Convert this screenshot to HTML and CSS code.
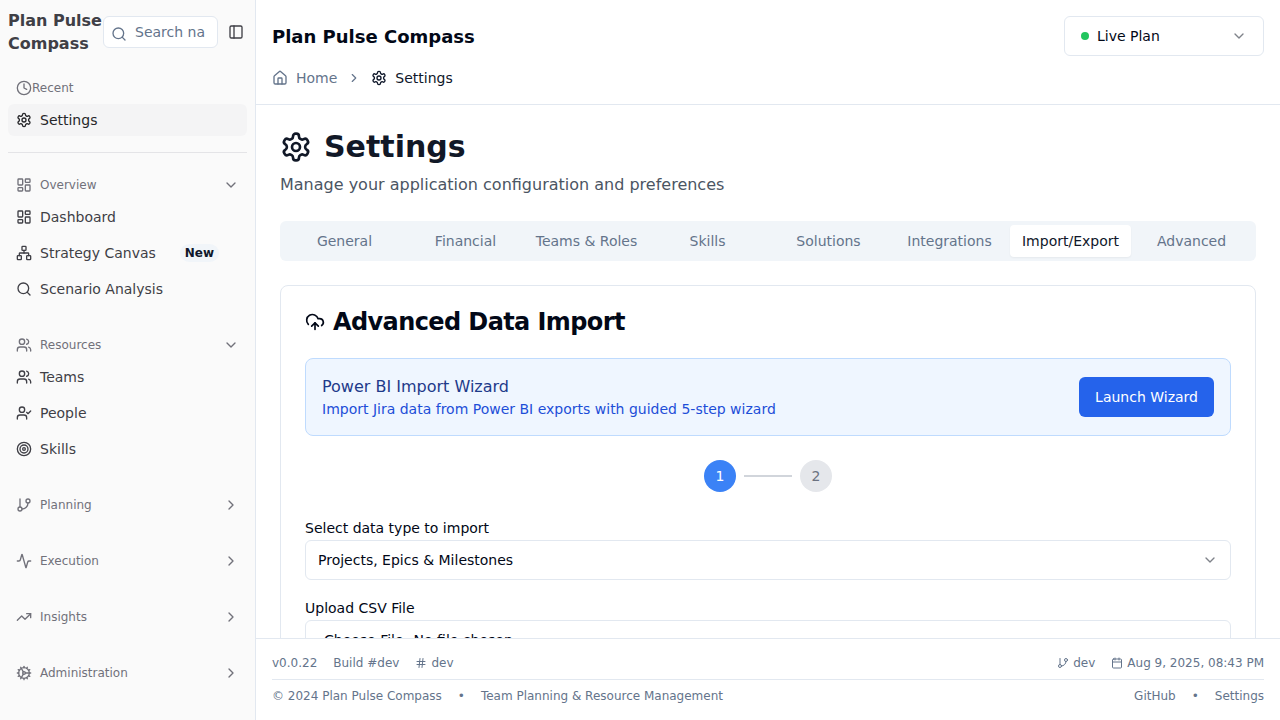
FILE: index.html
```html
<!DOCTYPE html>
<html lang="en">
<head>
    <meta charset="UTF-8">
    <title>Plan Pulse Compass</title>
    <link rel="stylesheet" href="styles.css">
</head>
<body>
<svg class="sprite" xmlns="http://www.w3.org/2000/svg">
    <symbol id="i-gear" viewBox="0 0 24 24"><path d="M12.22 2h-.44a2 2 0 0 0-2 2v.18a2 2 0 0 1-1 1.73l-.43.25a2 2 0 0 1-2 0l-.15-.08a2 2 0 0 0-2.73.73l-.22.38a2 2 0 0 0 .73 2.73l.15.1a2 2 0 0 1 1 1.72v.51a2 2 0 0 1-1 1.74l-.15.09a2 2 0 0 0-.73 2.73l.22.38a2 2 0 0 0 2.73.73l.15-.08a2 2 0 0 1 2 0l.43.25a2 2 0 0 1 1 1.73V20a2 2 0 0 0 2 2h.44a2 2 0 0 0 2-2v-.18a2 2 0 0 1 1-1.73l.43-.25a2 2 0 0 1 2 0l.15.08a2 2 0 0 0 2.73-.73l.22-.39a2 2 0 0 0-.73-2.73l-.15-.08a2 2 0 0 1-1-1.74v-.5a2 2 0 0 1 1-1.74l.15-.09a2 2 0 0 0 .73-2.73l-.22-.38a2 2 0 0 0-2.73-.73l-.15.08a2 2 0 0 1-2 0l-.43-.25a2 2 0 0 1-1-1.73V4a2 2 0 0 0-2-2z"/><circle cx="12" cy="12" r="3"/></symbol>
    <symbol id="i-dash" viewBox="0 0 24 24"><rect x="3" y="3" width="7" height="9" rx="1"/><rect x="14" y="3" width="7" height="5" rx="1"/><rect x="14" y="12" width="7" height="9" rx="1"/><rect x="3" y="16" width="7" height="5" rx="1"/></symbol>
    <symbol id="i-network" viewBox="0 0 24 24"><rect x="16" y="16" width="6" height="6" rx="1"/><rect x="2" y="16" width="6" height="6" rx="1"/><rect x="9" y="2" width="6" height="6" rx="1"/><path d="M5 16v-3a1 1 0 0 1 1-1h12a1 1 0 0 1 1 1v3"/><path d="M12 12V8"/></symbol>
    <symbol id="i-search" viewBox="0 0 24 24"><circle cx="11" cy="11" r="8"/><path d="m21 21-4.3-4.3"/></symbol>
    <symbol id="i-users" viewBox="0 0 24 24"><path d="M16 21v-2a4 4 0 0 0-4-4H6a4 4 0 0 0-4 4v2"/><circle cx="9" cy="7" r="4"/><path d="M22 21v-2a4 4 0 0 0-3-3.87"/><path d="M16 3.13a4 4 0 0 1 0 7.75"/></symbol>
    <symbol id="i-usercheck" viewBox="0 0 24 24"><path d="M16 21v-2a4 4 0 0 0-4-4H6a4 4 0 0 0-4 4v2"/><circle cx="9" cy="7" r="4"/><polyline points="16 11 18 13 22 9"/></symbol>
    <symbol id="i-target" viewBox="0 0 24 24"><circle cx="12" cy="12" r="10"/><circle cx="12" cy="12" r="6"/><circle cx="12" cy="12" r="2"/></symbol>
    <symbol id="i-branch" viewBox="0 0 24 24"><line x1="6" y1="3" x2="6" y2="15"/><circle cx="18" cy="6" r="3"/><circle cx="6" cy="18" r="3"/><path d="M18 9a9 9 0 0 1-9 9"/></symbol>
    <symbol id="i-activity" viewBox="0 0 24 24"><path d="M22 12h-2.48a2 2 0 0 0-1.93 1.46l-2.35 8.36a.25.25 0 0 1-.48 0L9.24 2.18a.25.25 0 0 0-.48 0l-2.35 8.36A2 2 0 0 1 4.49 12H2"/></symbol>
    <symbol id="i-trend" viewBox="0 0 24 24"><polyline points="22 7 13.5 15.5 8.5 10.5 2 17"/><polyline points="16 7 22 7 22 13"/></symbol>
    <symbol id="i-cog" viewBox="0 0 24 24"><path d="M12 20a8 8 0 1 0 0-16 8 8 0 0 0 0 16Z"/><path d="M12 14a2 2 0 1 0 0-4 2 2 0 0 0 0 4Z"/><path d="M12 2v2"/><path d="M12 22v-2"/><path d="m17 20.66-1-1.73"/><path d="M11 10.27 7 3.34"/><path d="m20.66 17-1.73-1"/><path d="m3.34 7 1.73 1"/><path d="M14 12h8"/><path d="M2 12h2"/><path d="m20.66 7-1.73 1"/><path d="m3.34 17 1.73-1"/><path d="m17 3.34-1 1.73"/><path d="m11 13.73-4 6.93"/></symbol>
    <symbol id="i-clock" viewBox="0 0 24 24"><circle cx="12" cy="12" r="10"/><polyline points="12 6 12 12 16 14"/></symbol>
    <symbol id="i-panel" viewBox="0 0 24 24"><rect x="3" y="3" width="18" height="18" rx="2"/><path d="M9 3v18"/></symbol>
    <symbol id="i-home" viewBox="0 0 24 24"><path d="M15 21v-8a1 1 0 0 0-1-1h-4a1 1 0 0 0-1 1v8"/><path d="M3 10a2 2 0 0 1 .709-1.528l7-5.999a2 2 0 0 1 2.582 0l7 5.999A2 2 0 0 1 21 10v9a2 2 0 0 1-2 2H5a2 2 0 0 1-2-2z"/></symbol>
    <symbol id="i-cloud" viewBox="0 0 24 24"><path d="M12 13v8"/><path d="M4 14.899A7 7 0 1 1 15.71 8h1.79a4.5 4.5 0 0 1 2.5 8.242"/><path d="m8 17 4-4 4 4"/></symbol>
    <symbol id="i-hash" viewBox="0 0 24 24"><line x1="4" y1="9" x2="20" y2="9"/><line x1="4" y1="15" x2="20" y2="15"/><line x1="10" y1="3" x2="8" y2="21"/><line x1="16" y1="3" x2="14" y2="21"/></symbol>
    <symbol id="i-calendar" viewBox="0 0 24 24"><path d="M8 2v4"/><path d="M16 2v4"/><rect x="3" y="4" width="18" height="18" rx="2"/><path d="M3 10h18"/></symbol>
    <symbol id="i-down" viewBox="0 0 24 24"><path d="m6 9 6 6 6-6"/></symbol>
    <symbol id="i-right" viewBox="0 0 24 24"><path d="m9 18 6-6-6-6"/></symbol>
</svg>

<div class="app">
    <aside class="sidebar">
        <div class="side-head">
            <div class="brand">Plan Pulse Compass</div>
            <div class="side-search">
                <svg class="icon"><use href="#i-search"/></svg>
                <span class="side-search-text">Search na</span>
            </div>
            <button class="side-toggle"><svg class="icon"><use href="#i-panel"/></svg></button>
        </div>

        <div class="recent">
            <div class="recent-label"><svg class="icon"><use href="#i-clock"/></svg>Recent</div>
            <a class="nav-item nav-item-active"><svg class="icon"><use href="#i-gear"/></svg>Settings</a>
        </div>
        <div class="side-sep"></div>

        <nav class="side-nav">
            <div class="nav-group">
                <div class="group-label"><svg class="icon"><use href="#i-dash"/></svg><span>Overview</span><svg class="icon group-arrow"><use href="#i-down"/></svg></div>
                <a class="nav-item"><svg class="icon"><use href="#i-dash"/></svg>Dashboard</a>
                <a class="nav-item"><svg class="icon"><use href="#i-network"/></svg>Strategy Canvas<span class="badge">New</span></a>
                <a class="nav-item"><svg class="icon"><use href="#i-search"/></svg>Scenario Analysis</a>
            </div>
            <div class="nav-group">
                <div class="group-label"><svg class="icon"><use href="#i-users"/></svg><span>Resources</span><svg class="icon group-arrow"><use href="#i-down"/></svg></div>
                <a class="nav-item"><svg class="icon"><use href="#i-users"/></svg>Teams</a>
                <a class="nav-item"><svg class="icon"><use href="#i-usercheck"/></svg>People</a>
                <a class="nav-item"><svg class="icon"><use href="#i-target"/></svg>Skills</a>
            </div>
            <div class="nav-group">
                <div class="group-label"><svg class="icon"><use href="#i-branch"/></svg><span>Planning</span><svg class="icon group-arrow"><use href="#i-right"/></svg></div>
            </div>
            <div class="nav-group">
                <div class="group-label"><svg class="icon"><use href="#i-activity"/></svg><span>Execution</span><svg class="icon group-arrow"><use href="#i-right"/></svg></div>
            </div>
            <div class="nav-group">
                <div class="group-label"><svg class="icon"><use href="#i-trend"/></svg><span>Insights</span><svg class="icon group-arrow"><use href="#i-right"/></svg></div>
            </div>
            <div class="nav-group">
                <div class="group-label"><svg class="icon"><use href="#i-cog"/></svg><span>Administration</span><svg class="icon group-arrow"><use href="#i-right"/></svg></div>
            </div>
        </nav>
    </aside>

    <div class="main">
        <header class="topbar">
            <div class="topbar-row">
                <div class="app-title">Plan Pulse Compass</div>
                <div class="plan-select">
                    <span class="plan-dot"></span>
                    <span class="plan-name">Live Plan</span>
                    <svg class="icon select-arrow"><use href="#i-down"/></svg>
                </div>
            </div>
            <div class="crumbs">
                <svg class="icon"><use href="#i-home"/></svg>
                <span class="crumb-link">Home</span>
                <svg class="icon crumb-sep"><use href="#i-right"/></svg>
                <svg class="icon crumb-now"><use href="#i-gear"/></svg>
                <span class="crumb-now">Settings</span>
            </div>
        </header>

        <main class="content">
            <h1 class="page-title"><svg class="icon"><use href="#i-gear"/></svg>Settings</h1>
            <p class="page-sub">Manage your application configuration and preferences</p>

            <div class="tabs">
                <div class="tab">General</div>
                <div class="tab">Financial</div>
                <div class="tab">Teams &amp; Roles</div>
                <div class="tab">Skills</div>
                <div class="tab">Solutions</div>
                <div class="tab">Integrations</div>
                <div class="tab tab-active">Import/Export</div>
                <div class="tab">Advanced</div>
            </div>

            <section class="card">
                <h2 class="card-title"><svg class="icon"><use href="#i-cloud"/></svg>Advanced Data Import</h2>

                <div class="wizard">
                    <div>
                        <div class="wizard-title">Power BI Import Wizard</div>
                        <div class="wizard-sub">Import Jira data from Power BI exports with guided 5-step wizard</div>
                    </div>
                    <button class="wizard-btn">Launch Wizard</button>
                </div>

                <div class="steps">
                    <span class="step step-on">1</span>
                    <span class="step-line"></span>
                    <span class="step">2</span>
                </div>

                <label class="field-label">Select data type to import</label>
                <div class="field-select">
                    <span>Projects, Epics &amp; Milestones</span>
                    <svg class="icon select-arrow"><use href="#i-down"/></svg>
                </div>

                <label class="field-label field-label-next">Upload CSV File</label>
                <input class="field-file" type="file">
            </section>
        </main>

        <footer class="footer">
            <div class="foot-row foot-row-top">
                <div class="foot-side">
                    <span>v0.0.22</span>
                    <span>Build #dev</span>
                    <span class="foot-icon-text"><svg class="icon"><use href="#i-hash"/></svg>dev</span>
                </div>
                <div class="foot-side">
                    <span class="foot-icon-text"><svg class="icon"><use href="#i-branch"/></svg>dev</span>
                    <span class="foot-icon-text"><svg class="icon"><use href="#i-calendar"/></svg>Aug 9, 2025, 08:43 PM</span>
                </div>
            </div>
            <div class="foot-row">
                <div class="foot-side">
                    <span>© 2024 Plan Pulse Compass</span>
                    <span>•</span>
                    <span>Team Planning &amp; Resource Management</span>
                </div>
                <div class="foot-side">
                    <span>GitHub</span>
                    <span>•</span>
                    <span>Settings</span>
                </div>
            </div>
        </footer>
    </div>
</div>
</body>
</html>
```

FILE: styles.css
```css
* {
    box-sizing: border-box;
    padding: 0;
    margin: 0;
}
html, body {
    height: 100%;
    overflow: hidden;
}
body {
    font-family: "DejaVu Sans", sans-serif;
    font-size: 14px;
    color: #020817;
    background: #fff;
}
.sprite {
    display: none;
}
.icon {
    width: 16px;
    height: 16px;
    flex: none;
    fill: none;
    stroke: currentColor;
    stroke-width: 2;
    stroke-linecap: round;
    stroke-linejoin: round;
}
.app {
    display: flex;
    height: 100%;
}

/* sidebar */
.sidebar {
    width: 256px;
    flex: none;
    background: #fafafa;
    border-right: 1px solid #e2e8f0;
    color: #3f3f46;
    overflow: hidden;
}
.side-head {
    display: flex;
    align-items: center;
    height: 64px;
    padding: 0 8px;
}
.brand {
    width: 95px;
    flex: none;
    font-size: 16px;
    font-weight: 700;
    line-height: 23px;
}
.side-search {
    width: 115px;
    height: 32px;
    flex: none;
    display: flex;
    align-items: center;
    gap: 8px;
    padding: 0 0 0 7px;
    background: #fff;
    border: 1px solid #e2e8f0;
    border-radius: 6px;
    color: #64748b;
}
.side-search .icon {
    margin-top: 4px;
}
.side-search-text {
    white-space: nowrap;
}
.side-toggle {
    margin-left: 10px;
    width: 16px;
    height: 16px;
    border: none;
    background: none;
    color: #3f3f46;
}
.recent {
    padding: 16px 8px 0;
}
.recent-label {
    display: flex;
    align-items: center;
    height: 16px;
    margin-bottom: 8px;
    padding-left: 8px;
    font-size: 12px;
    color: #71717a;
}
.nav-item {
    display: flex;
    align-items: center;
    gap: 8px;
    height: 32px;
    padding: 0 8px;
    border-radius: 6px;
    white-space: nowrap;
}
.nav-item + .nav-item {
    margin-top: 4px;
}
.nav-item-active {
    background: #f4f4f5;
    color: #27272a;
}
.side-sep {
    height: 1px;
    margin: 16px 8px 0;
    background: #e4e4e7;
}
.side-nav {
    display: flex;
    flex-direction: column;
    gap: 24px;
    padding: 16px 8px 0;
}
.group-label {
    display: flex;
    align-items: center;
    gap: 8px;
    height: 32px;
    padding: 0 8px;
    font-size: 12px;
    color: #71717a;
}
.group-arrow {
    margin-left: auto;
}
.badge {
    margin-left: 16px;
    padding: 1px 5px;
    height: 18px;
    line-height: 16px;
    font-size: 12px;
    font-weight: 700;
    color: #0f172a;
    background: #f1f5f9;
    border-radius: 9px;
}

/* top bar */
.main {
    flex: 1;
    min-width: 0;
    display: flex;
    flex-direction: column;
    height: 100%;
}
.topbar {
    flex: none;
    height: 105px;
    padding: 16px 16px 0;
    border-bottom: 1px solid #e2e8f0;
}
.topbar-row {
    display: flex;
    align-items: center;
    justify-content: space-between;
    height: 40px;
}
.app-title {
    font-size: 18px;
    font-weight: 700;
}
.plan-select {
    display: flex;
    align-items: center;
    width: 200px;
    height: 40px;
    padding: 0 16px;
    border: 1px solid #e2e8f0;
    border-radius: 6px;
}
.plan-dot {
    width: 8px;
    height: 8px;
    margin-right: 8px;
    border-radius: 50%;
    background: #22c55e;
}
.select-arrow {
    margin-left: auto;
    opacity: 0.5;
}
.crumbs {
    display: flex;
    align-items: center;
    height: 20px;
    margin-top: 12px;
    color: #64748b;
}
.crumb-link {
    margin-left: 8px;
}
.crumb-sep {
    width: 14px;
    height: 14px;
    margin: 0 10px;
}
.crumb-now {
    color: #0f172a;
}
span.crumb-now {
    margin-left: 8px;
}

/* page */
.content {
    flex: 1;
    min-height: 0;
    overflow: hidden;
    padding: 24px;
}
.page-title {
    display: flex;
    align-items: center;
    gap: 12px;
    font-size: 30px;
    line-height: 36px;
    color: #111827;
}
.page-title .icon {
    width: 32px;
    height: 32px;
}
.page-sub {
    margin-top: 8px;
    font-size: 16px;
    line-height: 24px;
    color: #4b5563;
}
.tabs {
    display: grid;
    grid-template-columns: repeat(8, 1fr);
    height: 40px;
    margin-top: 24px;
    padding: 4px;
    background: #f1f5f9;
    border-radius: 6px;
}
.tab {
    display: flex;
    align-items: center;
    justify-content: center;
    border-radius: 4px;
    color: #64748b;
}
.tab-active {
    background: #fff;
    color: #0f172a;
    box-shadow: 0 1px 2px rgba(0, 0, 0, 0.05);
}
.card {
    margin-top: 24px;
    padding: 24px;
    border: 1px solid #e2e8f0;
    border-radius: 8px;
}
.card-title {
    display: flex;
    align-items: center;
    gap: 8px;
    font-size: 24px;
    line-height: 24px;
    letter-spacing: -0.6px;
}
.card-title .icon {
    width: 20px;
    height: 20px;
}
.wizard {
    display: flex;
    align-items: center;
    justify-content: space-between;
    height: 78px;
    margin-top: 24px;
    padding: 0 16px;
    background: #eff6ff;
    border: 1px solid #bfdbfe;
    border-radius: 8px;
}
.wizard-title {
    font-size: 16px;
    line-height: 24px;
    color: #1e3a8a;
}
.wizard-sub {
    line-height: 20px;
    color: #1d4ed8;
}
.wizard-btn {
    height: 40px;
    padding: 0 16px;
    border: none;
    border-radius: 6px;
    background: #2563eb;
    color: #fff;
    font-family: inherit;
    font-size: 14px;
}
.steps {
    display: flex;
    align-items: center;
    justify-content: center;
    gap: 8px;
    margin-top: 24px;
}
.step {
    display: flex;
    align-items: center;
    justify-content: center;
    width: 32px;
    height: 32px;
    border-radius: 50%;
    background: #e5e7eb;
    color: #6b7280;
}
.step-on {
    background: #3b82f6;
    color: #fff;
}
.step-line {
    width: 48px;
    height: 2px;
    background: #d1d5db;
}
.field-label {
    display: block;
    margin-top: 26px;
    line-height: 20px;
}
.field-label-next {
    margin-top: 18px;
}
.field-select {
    display: flex;
    align-items: center;
    height: 40px;
    margin-top: 2px;
    padding: 0 12px;
    border: 1px solid #e2e8f0;
    border-radius: 6px;
}
.field-file {
    display: block;
    width: 100%;
    height: 40px;
    margin-top: 2px;
    padding: 10px 12px;
    border: 1px solid #e2e8f0;
    border-radius: 6px;
    font-family: inherit;
    font-size: 14px;
    color: #020817;
    background: #fff;
}
.field-file::file-selector-button {
    border: none;
    background: none;
    font-family: inherit;
    font-size: 14px;
    color: #020817;
}

/* footer */
.footer {
    flex: none;
    height: 82px;
    padding: 0 16px;
    background: #fff;
    border-top: 1px solid #e2e8f0;
    font-size: 12px;
    color: #64748b;
}
.foot-row {
    display: flex;
    align-items: center;
    justify-content: space-between;
    height: 32px;
}
.foot-row-top {
    height: 41px;
    padding-top: 8px;
    border-bottom: 1px solid #e2e8f0;
}
.foot-side {
    display: flex;
    align-items: center;
    gap: 16px;
}
.foot-icon-text {
    display: flex;
    align-items: center;
    gap: 4px;
}
.foot-icon-text .icon {
    width: 12px;
    height: 12px;
}
```
